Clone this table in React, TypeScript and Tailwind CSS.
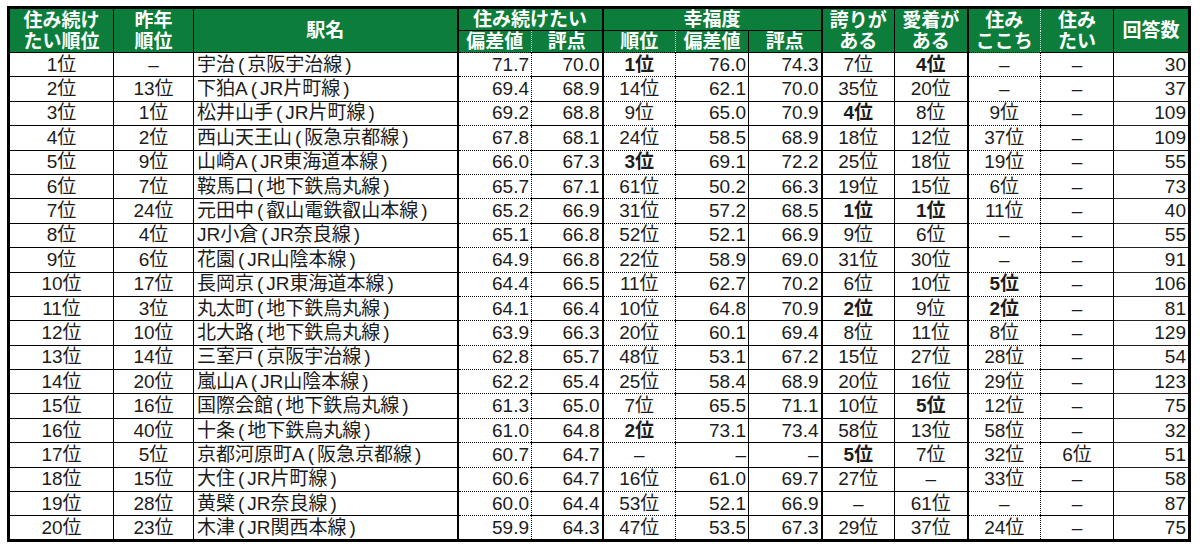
import React from 'react';

type Cell = string | [string, 'b'];
type Row = Cell[];

// 列ごとの幅・右罫線・寄せ
const cols = [
  { w: 'w-[105px]', br: 'border-r border-black', al: 'text-center' },
  { w: 'w-[80px]', br: 'border-r border-black', al: 'text-center' },
  { w: 'w-[264px]', br: 'border-r-2 border-black', al: 'text-left pl-[3px]' },
  { w: 'w-[74px]', br: 'border-r border-dotted border-black', al: 'text-right pr-[2px]' },
  { w: 'w-[71px]', br: 'border-r-2 border-black', al: 'text-right pr-[2px]' },
  { w: 'w-[73px]', br: 'border-r border-dotted border-black', al: 'text-center' },
  { w: 'w-[73px]', br: 'border-r border-black', al: 'text-right pr-[2px]' },
  { w: 'w-[73px]', br: 'border-r-2 border-black', al: 'text-right pr-[2px]' },
  { w: 'w-[73px]', br: 'border-r border-black', al: 'text-center' },
  { w: 'w-[73px]', br: 'border-r-2 border-black', al: 'text-center' },
  { w: 'w-[73px]', br: 'border-r border-dotted border-black', al: 'text-center' },
  { w: 'w-[73px]', br: 'border-r border-black', al: 'text-center' },
  { w: 'w-[76px]', br: '', al: 'text-right pr-[2px]' },
];

const B = (s: string): [string, 'b'] => [s, 'b'];
const D = '–';

const rows: Row[] = [
  ['1位', D, '宇治(京阪宇治線)', '71.7', '70.0', B('1位'), '76.0', '74.3', '7位', B('4位'), D, D, '30'],
  ['2位', '13位', '下狛A(JR片町線)', '69.4', '68.9', '14位', '62.1', '70.0', '35位', '20位', D, D, '37'],
  ['3位', '1位', '松井山手(JR片町線)', '69.2', '68.8', '9位', '65.0', '70.9', B('4位'), '8位', '9位', D, '109'],
  ['4位', '2位', '西山天王山(阪急京都線)', '67.8', '68.1', '24位', '58.5', '68.9', '18位', '12位', '37位', D, '109'],
  ['5位', '9位', '山崎A(JR東海道本線)', '66.0', '67.3', B('3位'), '69.1', '72.2', '25位', '18位', '19位', D, '55'],
  ['6位', '7位', '鞍馬口(地下鉄烏丸線)', '65.7', '67.1', '61位', '50.2', '66.3', '19位', '15位', '6位', D, '73'],
  ['7位', '24位', '元田中(叡山電鉄叡山本線)', '65.2', '66.9', '31位', '57.2', '68.5', B('1位'), B('1位'), '11位', D, '40'],
  ['8位', '4位', 'JR小倉(JR奈良線)', '65.1', '66.8', '52位', '52.1', '66.9', '9位', '6位', D, D, '55'],
  ['9位', '6位', '花園(JR山陰本線)', '64.9', '66.8', '22位', '58.9', '69.0', '31位', '30位', D, D, '91'],
  ['10位', '17位', '長岡京(JR東海道本線)', '64.4', '66.5', '11位', '62.7', '70.2', '6位', '10位', B('5位'), D, '106'],
  ['11位', '3位', '丸太町(地下鉄烏丸線)', '64.1', '66.4', '10位', '64.8', '70.9', B('2位'), '9位', B('2位'), D, '81'],
  ['12位', '10位', '北大路(地下鉄烏丸線)', '63.9', '66.3', '20位', '60.1', '69.4', '8位', '11位', '8位', D, '129'],
  ['13位', '14位', '三室戸(京阪宇治線)', '62.8', '65.7', '48位', '53.1', '67.2', '15位', '27位', '28位', D, '54'],
  ['14位', '20位', '嵐山A(JR山陰本線)', '62.2', '65.4', '25位', '58.4', '68.9', '20位', '16位', '29位', D, '123'],
  ['15位', '16位', '国際会館(地下鉄烏丸線)', '61.3', '65.0', '7位', '65.5', '71.1', '10位', B('5位'), '12位', D, '75'],
  ['16位', '40位', '十条(地下鉄烏丸線)', '61.0', '64.8', B('2位'), '73.1', '73.4', '58位', '13位', '58位', D, '32'],
  ['17位', '5位', '京都河原町A(阪急京都線)', '60.7', '64.7', D, D, D, B('5位'), '7位', '32位', '6位', '51'],
  ['18位', '15位', '大住(JR片町線)', '60.6', '64.7', '16位', '61.0', '69.7', '27位', D, '33位', D, '58'],
  ['19位', '28位', '黄檗(JR奈良線)', '60.0', '64.4', '53位', '52.1', '66.9', D, '61位', D, D, '87'],
  ['20位', '23位', '木津(JR関西本線)', '59.9', '64.3', '47位', '53.5', '67.3', '29位', '37位', '24位', D, '75'],
];

// 駅名の括弧は少し間をあける
function Station({ text }: { text: string }) {
  const m = text.match(/^(.*)\((.*)\)$/);
  if (!m) return <>{text}</>;
  return (
    <>
      {m[1]}
      <span className="mx-[3px]">(</span>
      {m[2]}
      <span className="mx-[3px]">)</span>
    </>
  );
}

const th = 'bg-[#0c7d3a] text-white font-bold text-[19px] leading-[21px] text-center align-middle p-0 border-b border-black';

export default function App() {
  return (
    <div className="w-[1200px] h-[550px] bg-white pt-[6px] pl-[7px]">
      <table className="table-fixed border-collapse border-[3px] border-black text-[#1c1c1c] font-['Liberation_Sans','Noto_Sans_CJK_JP',sans-serif]">
        <colgroup>
          {cols.map((c, i) => (
            <col key={i} className={c.w} />
          ))}
        </colgroup>
        <thead>
          <tr className="h-[22px]">
            <th rowSpan={2} className={`${th} border-r border-black`}>住み続け<br />たい順位</th>
            <th rowSpan={2} className={`${th} border-r border-black`}>昨年<br />順位</th>
            <th rowSpan={2} className={`${th} border-r-2 border-black`}>駅名</th>
            <th colSpan={2} className={`${th} border-r-2 border-black`}>住み続けたい</th>
            <th colSpan={3} className={`${th} border-r-2 border-black`}>幸福度</th>
            <th rowSpan={2} className={`${th} border-r border-black`}>誇りが<br />ある</th>
            <th rowSpan={2} className={`${th} border-r-2 border-black`}>愛着が<br />ある</th>
            <th rowSpan={2} className={`${th} border-r border-dotted border-r-[#d8e8dc]`}>住み<br />ここち</th>
            <th rowSpan={2} className={`${th} border-r border-black`}>住み<br />たい</th>
            <th rowSpan={2} className={th}>回答数</th>
          </tr>
          <tr className="h-[22px]">
            <th className={`${th} border-r border-dotted border-r-[#d8e8dc]`}>偏差値</th>
            <th className={`${th} border-r-2 border-black`}>評点</th>
            <th className={`${th} border-r border-dotted border-r-[#d8e8dc]`}>順位</th>
            <th className={`${th} border-r border-black`}>偏差値</th>
            <th className={`${th} border-r-2 border-black`}>評点</th>
          </tr>
        </thead>
        <tbody>
          {rows.map((r, ri) => (
            <tr key={ri} className="h-[24.4px]">
              {r.map((cell, ci) => {
                const bold = Array.isArray(cell);
                const text = bold ? cell[0] : cell;
                return (
                  <td
                    key={ci}
                    className={`p-0 text-[19px] leading-[22px] whitespace-nowrap overflow-hidden border-b border-[#222] ${cols[ci].br} ${cols[ci].al} ${bold ? 'font-bold' : ''}`}
                  >
                    {ci === 2 ? <Station text={text} /> : text}
                  </td>
                );
              })}
            </tr>
          ))}
        </tbody>
      </table>
    </div>
  );
}
